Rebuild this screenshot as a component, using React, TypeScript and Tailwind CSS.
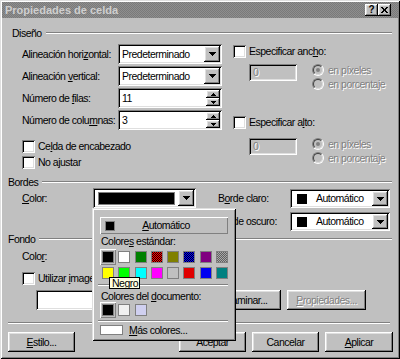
import React from 'react'

const frame =
  'shadow-[inset_1px_1px_#dfdfdf,inset_-1px_-1px_#000,inset_2px_2px_#fff,inset_-2px_-2px_#808080]'
const raised =
  'shadow-[inset_-1px_-1px_#000,inset_1px_1px_#fff,inset_-2px_-2px_#808080,inset_2px_2px_#dfdfdf]'
const sunken =
  'shadow-[inset_1px_1px_#808080,inset_-1px_-1px_#fff,inset_2px_2px_#000,inset_-2px_-2px_#dfdfdf]'
const thinRaised = 'shadow-[inset_1px_1px_#fff,inset_-1px_-1px_#808080]'
const etched = 'h-[2px] border-t border-b border-t-[#808080] border-b-white'
const disabledText = 'text-[#808080] [text-shadow:1px_1px_0_#fff]'

// "&" marks the access key letter
function Key({ text }: { text: string }) {
  const i = text.indexOf('&')
  if (i < 0) return <span className="whitespace-pre">{text}</span>
  return (
    <span className="whitespace-pre">
      {text.slice(0, i)}
      <span className="underline underline-offset-[1px]">{text[i + 1]}</span>
      {text.slice(i + 2)}
    </span>
  )
}

function ArrowDown() {
  return (
    <svg width="7" height="4" viewBox="0 0 7 4" shapeRendering="crispEdges">
      <path d="M0 0h7v1H0zM1 1h5v1H1zM2 2h3v1H2zM3 3h1v1H3z" fill="#000" />
    </svg>
  )
}

function SpinArrow({ up }: { up?: boolean }) {
  return (
    <svg width="5" height="3" viewBox="0 0 5 3" shapeRendering="crispEdges">
      <path
        d={up ? 'M2 0h1v1H2zM1 1h3v1H1zM0 2h5v1H0z' : 'M0 0h5v1H0zM1 1h3v1H1zM2 2h1v1H2z'}
        fill="#000"
      />
    </svg>
  )
}

function DropButton() {
  return (
    <span className={`flex w-[16px] shrink-0 items-center justify-center bg-[#c0c0c0] ${raised}`}>
      <ArrowDown />
    </span>
  )
}

function Select({ value }: { value: string }) {
  return (
    <div className={`flex h-[20px] w-[104px] bg-white p-[2px] ${sunken}`}>
      <span className="flex flex-1 items-center pl-[2px]">{value}</span>
      <DropButton />
    </div>
  )
}

function Spin({ value }: { value: string }) {
  return (
    <div className={`flex h-[20px] w-[104px] bg-white p-[2px] ${sunken}`}>
      <span className="flex flex-1 items-center pl-[2px]">{value}</span>
      <span className="flex w-[14px] flex-col">
        <span className={`flex flex-1 items-center justify-center bg-[#c0c0c0] ${raised}`}>
          <SpinArrow up />
        </span>
        <span className={`flex flex-1 items-center justify-center bg-[#c0c0c0] ${raised}`}>
          <SpinArrow />
        </span>
      </span>
    </div>
  )
}

function ColorCombo() {
  return (
    <div className={`flex h-[20px] w-[103px] bg-white p-[2px] ${sunken}`}>
      <span className="flex-1 pt-[2px] pr-[3px] pb-[1px] pl-[3px]">
        <span className="block h-full border border-[#808080] bg-black" />
      </span>
      <DropButton />
    </div>
  )
}

function AutoCombo() {
  return (
    <div className={`flex h-[19px] w-[100px] bg-white p-[2px] ${sunken}`}>
      <span className="flex flex-1 items-center gap-[9px] pl-[5px]">
        <span className="h-[10px] w-[10px] bg-black" />
        <span>Automático</span>
      </span>
      <DropButton />
    </div>
  )
}

function Check({ label, className = '' }: { label: string; className?: string }) {
  return (
    <div className={`flex items-center gap-[3px] ${className}`}>
      <span className={`h-[13px] w-[13px] shrink-0 bg-white ${sunken}`} />
      <Key text={label} />
    </div>
  )
}

function Radio({ label, checked }: { label: string; checked?: boolean }) {
  return (
    <div className="flex h-[14px] items-center gap-[4px]">
      <span className="flex h-[12px] w-[12px] shrink-0 rounded-full border border-t-[#808080] border-r-white border-b-white border-l-[#808080]">
        <span className="flex flex-1 items-center justify-center rounded-full border border-t-[#404040] border-r-[#dfdfdf] border-b-[#dfdfdf] border-l-[#404040] bg-[#c0c0c0]">
          {checked && <span className="h-[4px] w-[4px] rounded-full bg-[#808080]" />}
        </span>
      </span>
      <span className={`whitespace-nowrap ${disabledText}`}>{label}</span>
    </div>
  )
}

function SizeOptions({ className }: { className: string }) {
  return (
    <div className={`flex items-start pl-[16px] ${className}`}>
      <div className={`mt-[1px] flex h-[17px] w-[48px] items-center bg-[#c0c0c0] pl-[4px] ${sunken} ${disabledText}`}>
        0
      </div>
      <div className="ml-[15px] flex flex-col">
        <Radio checked label="en píxeles" />
        <Radio label="en porcentaje" />
      </div>
    </div>
  )
}

function Row({ label, children, className = '' }: { label: string; children: React.ReactNode; className?: string }) {
  return (
    <div className={`flex items-center ${className}`}>
      <span className="w-[96px]">
        <Key text={label} />
      </span>
      {children}
    </div>
  )
}

function GroupHeader({ title, className }: { title: string; className: string }) {
  return (
    <div className={`flex h-[12px] shrink-0 items-center pr-[8px] ${className}`}>
      <span>{title}</span>
      <span className={`ml-[4px] flex-1 ${etched}`} />
    </div>
  )
}

function Button({ label, className = '', disabled }: { label: string; className?: string; disabled?: boolean }) {
  return (
    <div
      className={`flex h-[20px] shrink-0 items-center justify-center bg-[#c0c0c0] ${raised} ${disabled ? disabledText : ''} ${className}`}
    >
      <Key text={label} />
    </div>
  )
}

function TitleButton({ children }: { children: React.ReactNode }) {
  return (
    <span className={`flex h-[12px] w-[13px] items-center justify-center bg-[#c0c0c0] ${raised}`}>
      {children}
    </span>
  )
}

const dither = 'bg-[length:2px_2px]'

const standard = [
  { cls: 'bg-black', sel: true },
  { cls: 'bg-white' },
  { cls: 'bg-[#008000]' },
  { cls: `bg-[image:repeating-conic-gradient(#ff0000_0_25%,#200000_0_50%)] ${dither}` },
  { cls: 'bg-[#808000]' },
  { cls: `bg-[image:repeating-conic-gradient(#0000ff_0_25%,#000020_0_50%)] ${dither}` },
  { cls: 'bg-[#800080]' },
  { cls: `bg-[image:repeating-conic-gradient(#a8a8a8_0_25%,#606060_0_50%)] ${dither}` },
  { cls: 'bg-[#ffff00]' },
  { cls: 'bg-[#00ff00]' },
  { cls: 'bg-[#00ffff]' },
  { cls: 'bg-[#ff00ff]' },
  { cls: 'bg-[#c0c0c0]' },
  { cls: 'bg-[#e00000]' },
  { cls: 'bg-[#0000f0]' },
  { cls: 'bg-[#008080]' },
]

const documentColors = [
  { cls: 'bg-black', sel: true },
  { cls: 'bg-[#f0f0f0]' },
  { cls: 'bg-[#d0d0f0]' },
]

function Swatch({ cls, sel }: { cls: string; sel?: boolean }) {
  return (
    <span className={`flex h-[16px] w-[16px] items-center justify-center ${sel ? thinRaised : ''}`}>
      <span className={`h-[12px] w-[12px] border border-[#808080] ${cls}`} />
    </span>
  )
}

const swatchCols = 'grid grid-cols-[16px_17px_16px_16px_16px_17px_16px_16px]'

function ColorPopup() {
  return (
    <div className={`absolute top-[208px] left-[92px] flex h-[133px] w-[144px] flex-col bg-[#c0c0c0] px-[6px] ${frame}`}>
      <div className={`mt-[9px] ml-[2px] flex h-[17px] w-[128px] shrink-0 items-center ${thinRaised}`}>
        <span className="ml-[5px] h-[10px] w-[10px] border border-[#808080] bg-black" />
        <span className="flex-1 pr-[11px] text-center">
          <Key text="&Automático" />
        </span>
      </div>
      <div className="mt-[1px] flex h-[12px] items-center pl-[3px]">
        <Key text="Colore&s estándar:" />
      </div>
      <div className={`mt-[2px] ml-[2px] ${swatchCols}`}>
        {standard.map((s, i) => (
          <Swatch key={i} cls={s.cls} sel={s.sel} />
        ))}
      </div>
      <div className={`mt-[3px] w-[130px] ${etched}`} />
      <div className="mt-[4px] flex h-[12px] items-center pl-[3px]">
        <Key text="Colores del &documento:" />
      </div>
      <div className={`ml-[2px] ${swatchCols}`}>
        {documentColors.map((s, i) => (
          <Swatch key={i} cls={s.cls} sel={s.sel} />
        ))}
      </div>
      <div className={`mt-[2px] w-[130px] ${etched}`} />
      <div className="mt-[2px] ml-[2px] flex h-[12px] items-center gap-[6px]">
        <span className="h-[10px] w-[23px] border border-[#808080] bg-white" />
        <Key text="&Más colores..." />
      </div>
    </div>
  )
}

export default function App() {
  return (
    <div
      className={`relative flex h-[359px] w-[400px] flex-col overflow-hidden bg-[#c0c0c0] font-['Liberation_Sans',Arial,sans-serif] text-[10.5px] leading-none tracking-[-0.5px] text-black select-none ${frame}`}
    >
      {/* title bar */}
      <div className="mx-[2px] mt-[2px] flex h-[16px] shrink-0 items-center bg-[#888] bg-[image:repeating-conic-gradient(#8e8e8e_0_25%,#7a7a7a_0_50%)] bg-[length:2px_2px] pr-[7px] pl-[3px]">
        <span className="flex-1 text-[11px] font-bold tracking-normal text-[#cfcfcf]">Propiedades de celda</span>
        <TitleButton>
          <span className="text-[10px] font-bold tracking-normal">?</span>
        </TitleButton>
        <TitleButton>
          <svg width="7" height="6" viewBox="0 0 7 6" shapeRendering="crispEdges">
            <path d="M0 0h2v1H0zM5 0h2v1H5zM1 1h2v1H1zM4 1h2v1H4zM2 2h3v2H2zM1 4h2v1H1zM4 4h2v1H4zM0 5h2v1H0zM5 5h2v1H5z" fill="#000" />
          </svg>
        </TitleButton>
      </div>

      {/* Diseño */}
      <GroupHeader title="Diseño" className="mt-[9px] pl-[12px]" />
      <div className="mt-[5px] flex items-start">
        <div className="flex w-[222px] shrink-0 flex-col pl-[22px]">
          <Row label="Alineación hori&zontal:">
            <Select value="Predeterminado" />
          </Row>
          <Row label="Alineación &vertical:" className="mt-[2px]">
            <Select value="Predeterminado" />
          </Row>
          <Row label="Número de &filas:" className="mt-[2px]">
            <Spin value="11" />
          </Row>
          <Row label="Número de colu&mnas:" className="mt-[2px]">
            <Spin value="3" />
          </Row>
          <Check label="Ce&lda de encabezado" className="mt-[8px] h-[16px]" />
          <Check label="No a&justar" className="h-[16px]" />
        </div>
        <div className="flex flex-col pl-[11px]">
          <Check label="Especificar anc&ho:" className="mt-[1px] h-[13px]" />
          <SizeOptions className="mt-[5px]" />
          <Check label="Especificar a&lto:" className="mt-[25px] h-[13px]" />
          <SizeOptions className="mt-[8px]" />
        </div>
      </div>

      {/* Bordes */}
      <GroupHeader title="Bordes" className="mt-[6px] pl-[8px]" />
      <div className="flex items-start">
        <div className="flex w-[218px] shrink-0 items-center pl-[22px]">
          <span className="w-[71px]">
            <Key text="&Color:" />
          </span>
          <ColorCombo />
        </div>
        <div className="flex flex-col">
          <div className="mt-[1px] flex items-center">
            <span className="w-[72px]">
              <Key text="B&orde claro:" />
            </span>
            <AutoCombo />
          </div>
          <div className="mt-[4px] flex items-center">
            <span className="w-[72px] whitespace-nowrap">Borde oscuro:</span>
            <AutoCombo />
          </div>
        </div>
      </div>

      {/* Fondo */}
      <GroupHeader title="Fondo" className="mt-[2px] pl-[8px]" />
      <div className="mt-[1px] flex items-center pl-[22px]">
        <span className="w-[71px]">
          <Key text="Colo&r:" />
        </span>
        <ColorCombo />
      </div>
      <Check label="Utilizar &imagen de fondo" className="mt-[5px] h-[14px] pl-[22px]" />
      <div className="mt-[5px] flex items-center pl-[36px]">
        <div className={`h-[20px] w-[165px] bg-white ${sunken}`} />
        <Button label="E&xaminar..." className="ml-[6px] w-[74px]" />
        <Button label="&Propiedades..." className="ml-[6px] w-[79px]" disabled />
      </div>

      <div className={`mt-[12px] mr-[10px] ml-[8px] ${etched}`} />

      <div className="mt-[8px] flex items-center pl-[8px]">
        <Button label="&Estilo..." className="w-[67px]" />
        <Button label="Aceptar" className="ml-[104px] w-[67px]" />
        <Button label="Cancelar" className="ml-[6px] w-[67px]" />
        <Button label="&Aplicar" className="ml-[6px] w-[68px]" />
      </div>

      <ColorPopup />

      {/* tooltip */}
      <div className="absolute top-[277px] left-[109px] flex h-[12px] w-[31px] items-center border border-black bg-[#ffffe1] pl-[2px]">
        Negro
      </div>
    </div>
  )
}
